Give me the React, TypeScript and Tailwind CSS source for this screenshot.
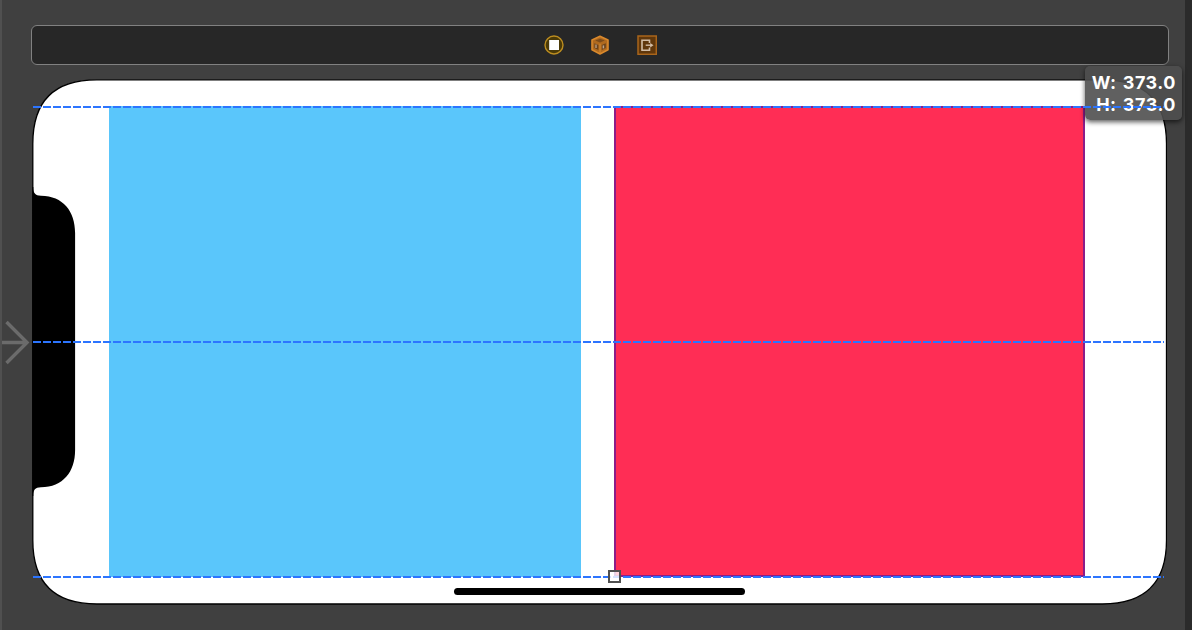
function SceneBar() {
  return (
    <div className="flex h-10 w-[1138px] items-center justify-center gap-[26.5px] rounded-[6px] border border-[#818181] bg-[#272727]">
      <svg className="h-5 w-5 shrink-0" viewBox="0 0 20 20">
        <circle cx="10" cy="10" r="9" fill="#4b3a07" stroke="#bd8e20" strokeWidth="1.4" />
        <rect x="5.2" y="5" width="9.8" height="10" fill="#fff" />
      </svg>
      <svg className="h-5 w-5 shrink-0" viewBox="0 0 20 20">
        <path d="M10 1.2 18 5V14.8L10 19 2 14.8V5Z" fill="#b06a1f" stroke="#da892c" strokeWidth="1.6" strokeLinejoin="round" />
        <path d="M5.2 5.6 10 3.8 14.8 5.6 10 7.4Z" fill="#7d4c1a" />
        <path d="M10 8.8V18" fill="none" stroke="#cf852f" strokeWidth="1.2" />
        <path d="M4.4 8.2 8.4 10V15L4.4 13Z" fill="#6b431b" />
        <path d="M6 9.6V13" stroke="#c0a488" strokeWidth="1.3" />
        <path d="M11.8 10 15.8 8.2V13L11.8 15Z" fill="#6b431b" />
        <path d="M13.4 10.4V13.4" stroke="#c0a488" strokeWidth="1.5" />
      </svg>
      <svg className="h-5 w-5 shrink-0" viewBox="0 0 20 20">
        <rect x="1" y="1" width="18.3" height="18.3" fill="#60370b" stroke="#a9651b" strokeWidth="1.5" />
        <path d="M12.5 8V5.2H5V15.2H12.5V12.4" fill="none" stroke="#d3bda5" strokeWidth="1.6" />
        <path d="M8.7 10.2H15" stroke="#d3bda5" strokeWidth="1.4" />
        <path d="M13.2 7.9 16.5 10.2 13.2 12.5Z" fill="#d3bda5" />
      </svg>
    </div>
  );
}

function DeviceFrame() {
  return (
    <svg className="absolute inset-0 h-[526px] w-[1135px]" viewBox="0 0 1135 526">
      <path
        d="M64.8 .8H1070.5C1113.5 .8 1134.5 21.8 1134.5 64.8V461C1134.5 504 1113.5 525 1070.5 525H64.8C21.8 525 .8 504 .8 461V64.8C.8 21.8 21.8 .8 64.8 .8Z"
        fill="#fff"
        stroke="#000"
        strokeWidth="1.3"
      />
      <path
        d="M.2 108H1.3C1.3 114 3 116.7 9 116.7C31 117 43.1 132 43.1 154V371C43.1 393 31 408 9 408.3C3 408.3 1.3 411 1.3 417H.2Z"
        fill="#000"
      />
    </svg>
  );
}

function Guide({ className }: { className: string }) {
  return (
    <div
      className={`absolute left-px h-[2px] w-[1131px] bg-[repeating-linear-gradient(to_right,#2c75ff_0px,#2c75ff_8px,transparent_8px,transparent_10px)] ${className}`}
    />
  );
}

export default function App() {
  return (
    <div className="flex h-[630px] w-[1192px] overflow-hidden bg-[#404040]">
      <div className="w-[2px] shrink-0 bg-[#505050]" />
      <div className="relative flex w-[1183px] shrink-0 flex-col pl-[29px] pt-[25px]">
        <SceneBar />
        <div className="relative ml-px mt-[14px] flex h-[526px] w-[1135px] items-start pl-[77px] pt-[27px]">
          <DeviceFrame />
          <div className="relative h-[471px] w-[472px] bg-[#5ac6fb]" />
          <div className="relative ml-[33px] h-[471px] w-[471px] border-2 border-[#8c1d88] bg-[#ff2d55]">
            <div className="absolute -bottom-[8px] -left-[8px] z-10 h-[13px] w-[13px] border-2 border-[#505050] bg-white/80" />
          </div>
          <div className="absolute left-[422px] top-[509px] h-[7px] w-[291px] rounded-full bg-black" />
          <div className="absolute -top-[13px] left-[1053px] h-[54px] w-[97px] whitespace-nowrap rounded-[5px] bg-[#4f4f4f]/90 pr-[6px] pt-[6px] text-right font-['Inter',sans-serif] text-[18px] font-bold leading-[22px] tracking-[0.5px] text-white shadow-[0_2px_5px_rgba(0,0,0,0.65)] [font-feature-settings:'calt'_0] [word-spacing:1.5px]">
            <div>W: 373.0</div>
            <div>H: 373.0</div>
          </div>
          <Guide className="top-[27px]" />
          <Guide className="top-[262px]" />
          <Guide className="top-[497px]" />
        </div>
        <svg className="absolute left-0 top-[320px] h-[46px] w-[30px]" viewBox="0 0 30 46">
          <path d="M0 22.5H25M4.5 2 25 22.5 4.5 43" fill="none" stroke="#6b6b6b" strokeWidth="3.4" />
        </svg>
      </div>
      <div className="w-[7px] shrink-0 bg-[#2b2b2b]" />
    </div>
  );
}
